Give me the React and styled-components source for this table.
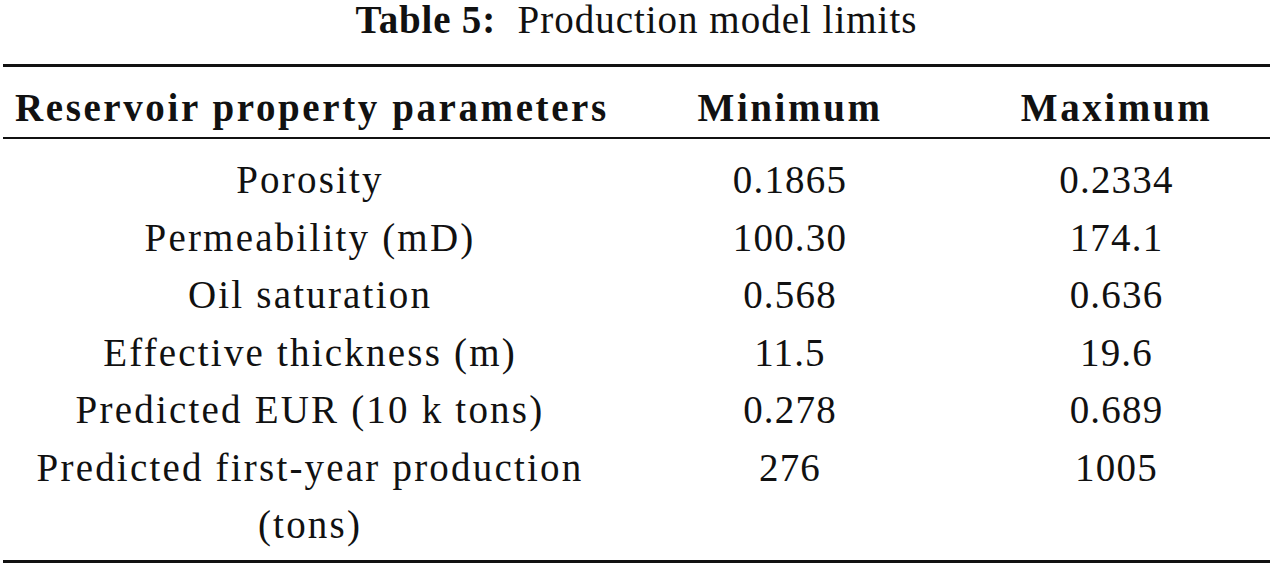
import React from "react";
import styled, { createGlobalStyle } from "styled-components";

const GlobalStyle = createGlobalStyle`
  html, body {
    margin: 0;
    padding: 0;
    background: #fff;
  }
  body {
    font-family: "Liberation Serif", "Times New Roman", serif;
    color: #111;
  }
`;

const rows = [
  { name: "Porosity", min: "0.1865", max: "0.2334" },
  { name: "Permeability (mD)", min: "100.30", max: "174.1" },
  { name: "Oil saturation", min: "0.568", max: "0.636" },
  { name: "Effective thickness (m)", min: "11.5", max: "19.6" },
  { name: "Predicted EUR (10 k tons)", min: "0.278", max: "0.689" },
  { name: "Predicted first-year production (tons)", min: "276", max: "1005" },
];

export default function App() {
  return (
    <>
      <GlobalStyle />
      <Page>
        <Caption>
          <b>Table 5:</b>&nbsp; Production model limits
        </Caption>
        <Table>
          <HeadRow>
            <Cell bold>Reservoir property parameters</Cell>
            <Cell bold>Minimum</Cell>
            <Cell bold>Maximum</Cell>
          </HeadRow>
          <Body>
            {rows.map((r) => (
              <Row key={r.name}>
                <Cell>{r.name}</Cell>
                <Cell num>{r.min}</Cell>
                <Cell num>{r.max}</Cell>
              </Row>
            ))}
          </Body>
        </Table>
      </Page>
    </>
  );
}

const Page = styled.div`
  width: 1267px;
  padding: 0 3px;
`;

const Caption = styled.div`
  height: 64px;
  line-height: 40px;
  font-size: 39px;
  letter-spacing: 1px;
  text-align: center;
  b {
    font-weight: 700;
    letter-spacing: 0.8px;
  }
`;

const Table = styled.div`
  border-top: 3px solid #111;
  border-bottom: 3px solid #111;
`;

const Columns = styled.div`
  display: grid;
  grid-template-columns: 614px 346px 1fr;
`;

const HeadRow = styled(Columns)`
  box-sizing: border-box;
  height: 72px;
  padding-top: 11px;
  line-height: 59px;
  border-bottom: 2px solid #111;
`;

const Body = styled.div`
  padding: 12px 0 6px;
`;

const Row = styled(Columns)`
  line-height: 57.5px;
`;

const Cell = styled.div`
  font-size: 39px;
  text-align: center;
  padding: 0 12px;
  font-weight: ${(p) => (p.bold ? 700 : 400)};
  letter-spacing: ${(p) => (p.bold ? "2.6px" : p.num ? "1.2px" : "2.2px")};
  white-space: ${(p) => (p.bold ? "nowrap" : "normal")};
`;
